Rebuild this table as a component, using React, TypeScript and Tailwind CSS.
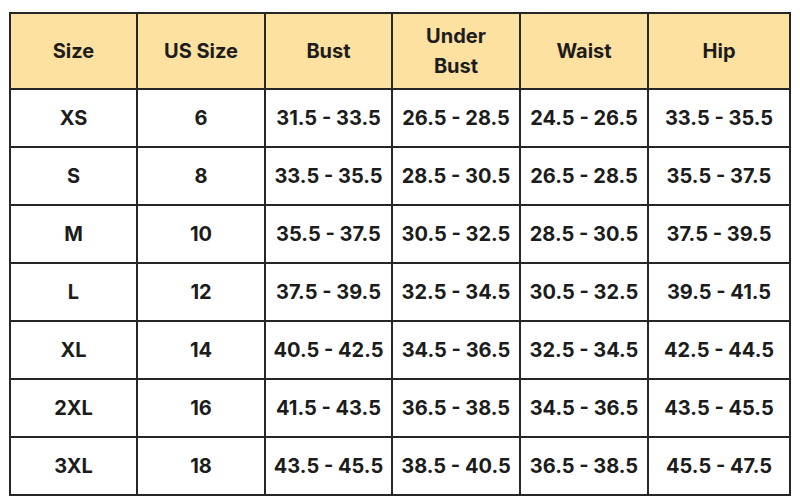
const headers = ["Size", "US Size", "Bust", "Under Bust", "Waist", "Hip"];

const rows = [
  ["XS", "6", "31.5 - 33.5", "26.5 - 28.5", "24.5 - 26.5", "33.5 - 35.5"],
  ["S", "8", "33.5 - 35.5", "28.5 - 30.5", "26.5 - 28.5", "35.5 - 37.5"],
  ["M", "10", "35.5 - 37.5", "30.5 - 32.5", "28.5 - 30.5", "37.5 - 39.5"],
  ["L", "12", "37.5 - 39.5", "32.5 - 34.5", "30.5 - 32.5", "39.5 - 41.5"],
  ["XL", "14", "40.5 - 42.5", "34.5 - 36.5", "32.5 - 34.5", "42.5 - 44.5"],
  ["2XL", "16", "41.5 - 43.5", "36.5 - 38.5", "34.5 - 36.5", "43.5 - 45.5"],
  ["3XL", "18", "43.5 - 45.5", "38.5 - 40.5", "36.5 - 38.5", "45.5 - 47.5"],
];

export default function App() {
  return (
    <div className="w-[800px] h-[500px] bg-white pl-[9px] pt-[12px] font-['Inter',sans-serif] text-[#1c1c1c]">
      <div className="grid grid-cols-[127px_128px_127px_128px_128px_142px] grid-rows-[76px_repeat(7,58px)] w-fit border-l-2 border-t-2 border-[#262626]">
        {headers.map((h) => (
          <div
            key={h}
            className="flex items-center justify-center text-center border-r-2 border-b-2 border-[#262626] bg-[#fde1a0] text-[20px] font-bold leading-[30px] px-6"
          >
            {h}
          </div>
        ))}
        {rows.map((row) =>
          row.map((cell, i) => (
            <div
              key={row[0] + i}
              className="flex items-center justify-center border-r-2 border-b-2 border-[#262626] text-[20px] font-bold whitespace-nowrap"
            >
              {cell}
            </div>
          ))
        )}
      </div>
    </div>
  );
}
